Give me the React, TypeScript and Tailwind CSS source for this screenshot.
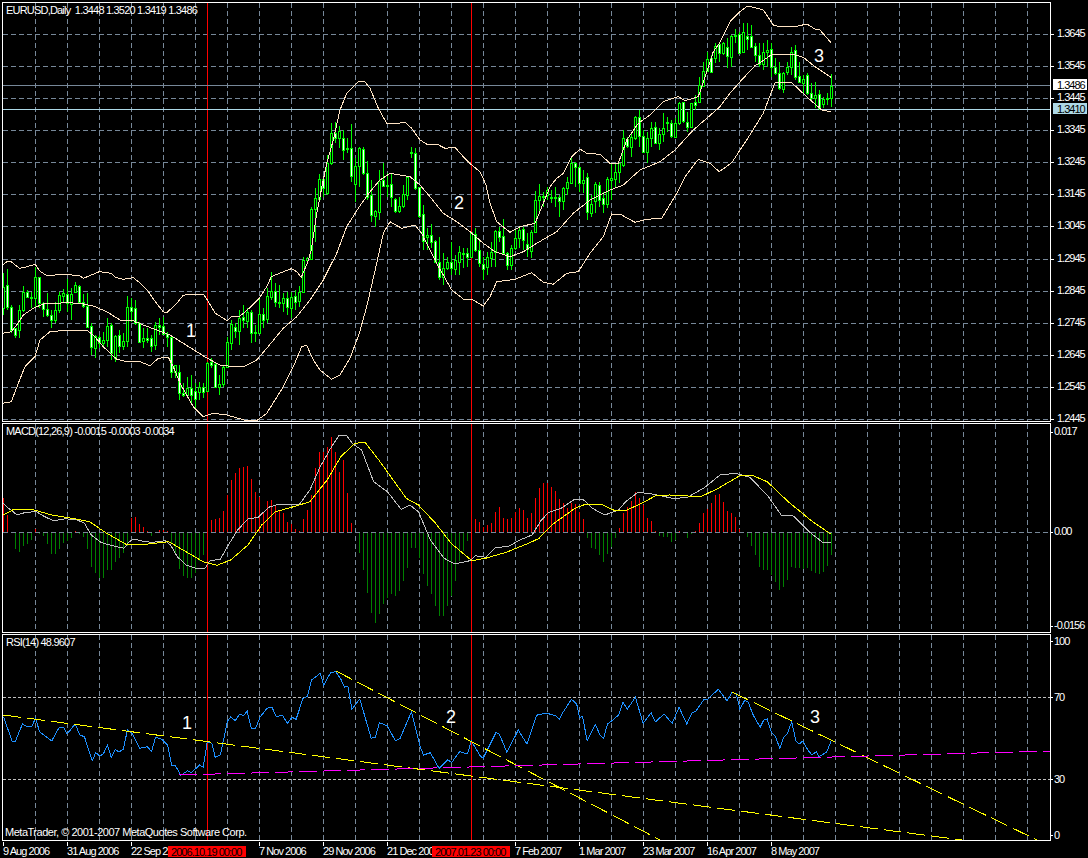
import type { ReactNode } from "react";

const GRID = "#778899";
const X_TICKS = Array.from({ length: 32 }, (_, i) => 35 + 32 * i);

// candles: [high, low, bodyTop, bodyBottom], read off at 3x, one every 4px from x=3
const candles = [
  [820,945,860,925],[808,930,855,920],[915,1000,920,990],[985,1015,985,1005],[915,1015,930,990],[858,935,875,930],[870,895,875,892],[875,925,890,895],[800,925,832,893],[832,925,832,910],
  [905,950,910,928],[880,950,928,945],[930,985,945,960],[905,970,930,960],[875,940,885,930],[868,905,878,887],[838,935,882,910],[865,960,882,912],[845,880,856,875],[855,910,858,905],
  [882,925,905,918],[880,985,918,980],[970,1065,978,1040],[1005,1075,1008,1045],[1005,1045,1010,1030],[995,1040,1020,1028],[955,1040,978,1020],[970,1080,975,1060],[1005,1085,1008,1075],[990,1060,1006,1038],
  [1000,1050,1024,1038],[888,1040,920,1022],[895,965,922,932],[900,975,925,970],[965,1030,970,1025],[985,1045,1015,1022],[985,1030,1015,1020],[1005,1055,1015,1038],[965,1050,975,1035],[955,1005,975,982],
  [950,1005,978,1002],[995,1040,1002,1010],[1005,1135,1012,1115],[1095,1135,1095,1115],[1095,1200,1115,1180],[1150,1190,1178,1185],[1130,1195,1165,1185],[1125,1210,1163,1185],[1150,1225,1173,1198],[1145,1200,1162,1175],
  [1150,1195,1162,1175],[1085,1175,1088,1172],[1075,1105,1085,1095],[1090,1165,1092,1162],[1125,1185,1152,1162],[1095,1160,1102,1152],[1010,1105,1025,1100],[960,1050,972,1028],[970,1015,982,992],[930,1035,955,992],
  [915,985,952,960],[925,985,935,962],[930,1030,935,998],[975,1025,996,999],[890,1000,943,998],[925,985,943,960],[865,970,887,958],[815,900,872,890],[850,920,872,905],[855,925,905,908],
  [880,935,895,908],[875,945,893,920],[875,955,892,925],[870,930,888,905],[858,920,876,902],[770,880,780,875],[772,782,775,780],[620,780,628,778],[565,725,595,628],[522,600,538,598],
  [530,590,538,565],[465,585,490,578],[368,495,398,490],[365,430,398,415],[378,445,393,415],[390,480,415,450],[415,460,445,448],[372,545,445,528],[475,605,497,552],[440,560,445,497],
  // second stretch
  [440,525,447,520],[482,600,520,590],[540,665,585,645],[630,680,633,647],[510,660,543,635],[488,562,540,558],[520,590,555,558],[522,620,552,590],[595,640,598,632],[590,640,618,632],
  [555,625,583,618],[530,600,530,585],[440,475,456,460],[445,570,460,565],[560,655,562,648],[615,750,642,722],[685,750,705,710],[672,745,705,725],[720,790,722,787],[710,840,787,830],
  [760,855,805,832],[770,810,787,803],[725,825,787,805],[765,825,780,806],[738,825,757,785],[745,805,760,762],[745,800,760,772],[695,775,697,772],[685,755,702,750],[720,800,750,790],
  [770,840,793,808],[755,825,772,802],[725,800,755,775],[690,800,692,755],[680,725,692,710],[658,765,707,760],[755,810,760,795],[735,810,745,795],[690,750,715,745],[680,745,690,715],
  [680,750,688,720],[700,770,733,748],[690,775,695,752],[572,700,600,695],[552,640,588,600],[575,620,588,590],[560,600,570,584],[570,610,590,595],[560,620,590,595],[585,650,590,602],
  [560,630,565,602],[530,585,545,565],[470,550,490,548],[485,560,490,500],[495,575,500,548],[510,580,540,548],[520,660,532,637],[585,650,612,638],[545,640,552,603],[545,620,555,600],
  [575,640,595,613],[530,625,538,612],[490,600,535,540],[490,560,515,537],[490,550,490,516],[390,500,415,495],[410,445,418,438],[395,470,412,440],[348,420,352,415],[330,440,352,408],
  [390,460,408,456],[395,490,415,455],[365,440,385,415],[365,430,382,428],[385,450,403,428],[340,425,385,402],[350,395,366,370],[360,415,370,408],[355,415,370,410],[305,375,310,370],
  [305,370,307,362],[335,395,365,382],[308,385,310,382],[285,330,305,315],[230,310,255,305],[185,260,212,258],[155,216,178,214],[165,218,175,215],[130,190,137,175],[128,185,132,160],
  // last stretch
  [125,165,130,158],[115,205,142,168],[105,200,108,170],[88,130,105,108],[95,160,103,158],[70,158,97,155],[70,150,108,116],[75,145,108,142],[130,185,138,165],[128,200,165,192],
  [130,210,157,192],[120,200,150,155],[128,230,148,200],[175,225,202,218],[185,270,218,265],[215,280,220,268],[185,225,202,215],[140,225,155,202],[135,240,150,230],[185,250,228,245],
  [225,280,238,248],[220,285,225,280],[250,305,278,295],[245,325,286,294],[270,330,283,325],[290,325,297,312],[280,315,295,296],[222,320,257,293],
];

let prevClose = 900;
const bodies = candles.map(([hi, lo, top, bot], k) => {
  const bear = Math.abs(top - prevClose) <= Math.abs(bot - prevClose);
  prevClose = bear ? bot : top;
  return { x: 3 + 4 * k, hi: Math.round(hi / 3), lo: Math.round(lo / 3), top: Math.round(top / 3), bot: Math.round(bot / 3), bear };
});

// macd histogram: top of each bar at 3x, zero line sits at 337
const hist = [
  235,285,337,385,392,375,368,358,327,338,345,370,400,400,385,365,360,350,333,340,348,383,438,455,470,470,447,447,422,412,395,375,295,292,312,322,333,345,335,330,330,333,368,395,443,465,472,472,455,420,402,337,
  300,297,295,272,225,180,160,145,140,138,178,215,230,280,243,240,255,272,280,305,312,328,333,297,270,225,143,95,95,80,50,95,155,120,218,308,337,
  395,447,515,575,605,578,550,530,520,525,510,480,440,380,380,410,460,495,520,555,585,585,555,525,480,420,390,360,337,
  297,305,320,315,310,275,262,295,298,295,275,265,270,295,280,235,205,190,188,200,213,237,250,265,250,252,275,297,
  352,382,383,403,422,398,377,350,325,278,262,243,215,233,255,293,303,333,345,348,347,362,357,333,337,352,340,333,308,278,268,248,225,222,245,272,280,292,327,335,
  347,375,402,437,447,447,463,482,507,497,478,437,440,442,445,442,450,455,458,453,435,402,
];

type Seg = [number, number][];
const pts = (segs: { dx: number; sx: number; sy: number; dy: number; p: Seg }[]) =>
  segs.flatMap((s) => s.p.map(([x, y]) => `${(x / s.sx + s.dx).toFixed(1)},${(y / s.sy + s.dy).toFixed(1)}`)).join(" ");

const main = (dx: number, p: Seg) => ({ dx, sx: 3, sy: 3, dy: 0, p });
const upper = pts([
  main(0, [[8,795],[22,784],[34,785],[46,795],[58,805],[70,803],[106,793],[118,812],[142,828],[166,825],[202,822],[220,826],[238,826],[250,835],[274,825],[298,815],[334,820],[346,832],[370,838],[400,833],[418,847],[442,870],[466,905],[490,935],[500,938],[526,915],[550,886],[574,882],[610,882],[622,900],[646,940],[682,962],[694,950],[718,950],[742,930],[778,895],[800,860],[814,830],[838,820],[874,806],[890,815],[904,832],[922,790],[934,750],[950,640],[970,540],[980,490],[1000,420],[1020,330],[1040,280],[1078,243]]),
  main(360, [[15,245],[30,265],[55,325],[80,370],[100,372],[135,367],[155,385],[180,420],[205,435],[230,432],[255,445],[285,442],[310,470],[335,495],[360,515],[378,555],[390,610],[410,665],[450,697],[480,680],[525,670],[550,610],[570,560],[590,535],[610,520],[635,470],[660,447],[680,460],[720,463],[750,490],[775,490],[800,420],[835,370],[870,345],[910,305],[955,290],[975,302],[1015,290],[1040,215],[1060,155],[1080,127]]),
  main(720, [[30,65],[60,35],[82,18],[105,23],[130,30],[160,75],[170,78],[235,78],[260,72],[285,87],[300,90],[333,128]]),
]);
const middle = pts([
  main(0, [[8,1000],[34,995],[50,975],[70,945],[100,925],[130,912],[160,910],[210,908],[250,912],[280,918],[320,935],[360,960],[400,962],[430,975],[470,990],[510,1005],[550,1030],[590,1055],[622,1075],[660,1095],[700,1100],[730,1100],[770,1080],[800,1045],[850,985],[890,950],[930,900],[970,840],[1010,760],[1040,680],[1078,620]]),
  main(360, [[30,575],[60,540],[90,520],[120,525],[150,530],[180,555],[210,590],[250,640],[290,665],[330,695],[370,730],[405,755],[450,770],[490,755],[530,730],[590,695],[640,640],[690,600],[750,570],[790,555],[840,510],[900,485],[945,450],[1000,390],[1078,322]]),
  main(720, [[30,280],[60,245],[105,197],[125,185],[155,163],[220,163],[250,172],[285,200],[333,232]]),
]);
const lower = pts([
  main(0, [[8,1210],[34,1205],[55,1150],[75,1100],[105,1070],[120,1020],[150,995],[200,991],[260,991],[280,1005],[310,1040],[350,1078],[380,1085],[420,1085],[450,1097],[475,1075],[505,1072],[520,1100],[540,1150],[580,1220],[610,1250],[640,1240],[680,1245],[740,1262],[770,1262],[800,1240],[850,1160],[880,1100],[905,1040],[920,1036],[940,1080],[960,1110],[995,1138],[1020,1125],[1050,1075],[1078,1000]]),
  main(360, [[20,920],[50,790],[70,700],[90,665],[125,685],[165,675],[185,700],[230,790],[275,870],[310,897],[340,900],[370,918],[390,890],[410,845],[465,838],[515,818],[550,847],[580,853],[620,820],[655,815],[690,760],[730,710],[755,642],[785,645],[825,667],[860,658],[905,655],[950,580],[975,530],[1015,478],[1050,490],[1078,515]]),
  main(720, [[35,488],[80,420],[130,340],[165,248],[215,248],[260,290],[305,330],[333,335]]),
]);

const macdSilver = pts([
  { dx: 0, sx: 2.904, sy: 3, dy: 420, p: [[10,250],[25,265],[50,285],[75,277],[105,275],[130,290],[155,302],[190,296],[225,300],[245,310],[265,345],[295,368],[330,378],[360,385],[375,365],[390,357],[420,365],[445,367],[480,362],[495,375],[515,410],[540,435],[570,445],[595,445],[610,422],[640,418],[660,380],[690,330],[720,297],[750,292],[780,262],[810,252],[840,255],[870,252],[900,210],[930,140],[960,85],[985,45],[1005,45],[1025,72],[1050,90],[1085,185],[1125,215],[1165,268],[1190,255],[1215,275],[1250,360],[1290,415],[1320,432],[1365,422],[1380,407],[1410,412],[1440,382],[1475,380],[1510,360],[1545,345],[1566,310]] },
  { dx: 540, sx: 2.861, sy: 3, dy: 420, p: [[0,305],[25,277],[60,265],[100,237],[125,240],[150,265],[185,285],[225,270],[245,245],[280,217],[320,222],[380,235],[420,233],[470,203],[515,165],[560,160],[600,172],[650,225],[690,285],[725,288],[770,335],[810,368],[833,368]] },
]);
const macdYellow = pts([
  { dx: 0, sx: 2.904, sy: 3, dy: 420, p: [[10,285],[40,268],[100,270],[150,285],[220,297],[260,305],[310,340],[370,375],[430,372],[490,365],[540,395],[590,425],[630,436],[670,420],[720,375],[760,315],[800,275],[860,258],[900,245],[950,180],[990,110],[1030,70],[1060,67],[1100,120],[1180,235],[1215,255],[1265,310],[1310,370],[1370,422],[1410,415],[1470,397],[1530,372],[1566,355]] },
  { dx: 540, sx: 2.861, sy: 3, dy: 420, p: [[0,350],[40,310],[100,265],[130,253],[175,253],[215,272],[245,272],[290,250],[330,228],[370,225],[460,230],[510,205],[570,168],[610,167],[650,185],[710,245],[780,305],[833,343]] },
]);
const rsi = pts([
  { dx: 0, sx: 2.904, sy: 3, dy: 630, p: [[10,260],[35,333],[45,333],[65,282],[80,290],[92,290],[103,265],[115,305],[150,333],[172,292],[185,292],[195,312],[218,282],[232,315],[245,320],[268,392],[278,368],[290,378],[300,372],[312,345],[323,382],[335,358],[345,366],[358,358],[370,300],[385,312],[405,355],[428,350],[440,365],[452,322],[470,328],[487,345],[498,405],[510,408],[525,436],[545,422],[555,428],[580,405],[590,412],[602,335],[615,340],[625,382],[640,375],[660,275],[670,260],[683,272],[695,254],[708,256],[718,244],[730,296],[742,296],[755,262],[775,235],[790,232],[802,260],[820,256],[835,280],[848,262],[860,268],[880,205],[892,200],[905,150],[930,130],[940,165],[960,128],[975,125],[990,148],[1000,172],[1010,168],[1022,238],[1045,207],[1078,325],[1090,322],[1102,278],[1125,288],[1148,332],[1162,325],[1195,245],[1220,350],[1230,375],[1250,368],[1275,415],[1300,390],[1312,397],[1335,365],[1358,372],[1368,332],[1395,378],[1403,385],[1440,308],[1450,312],[1472,367],[1505,300],[1530,342],[1558,256]] },
  { dx: 540, sx: 2.861, sy: 3, dy: 630, p: [[0,253],[20,250],[45,257],[55,268],[65,248],[90,208],[105,222],[113,262],[122,260],[135,333],[158,283],[172,315],[182,325],[193,282],[205,273],[225,255],[237,217],[250,237],[273,202],[295,280],[318,248],[330,276],[355,252],[378,280],[398,232],[420,282],[435,248],[445,245],[470,207],[480,207],[510,178],[535,212],[550,187],[562,192],[572,238],[585,212],[595,215],[610,255],[630,292],[640,270],[650,267],[662,308],[673,318],[686,355],[697,322],[708,310],[720,275],[732,332],[742,342],[752,333],[765,358],[778,375],[790,365],[798,380],[820,367],[833,332]] },
]);

const priceTicks: [number, string][] = [
  [34,"1.3645"],[66,"1.3545"],[98,"1.3445"],[130,"1.3345"],[162,"1.3245"],[194,"1.3145"],[226,"1.3045"],[259,"1.2945"],[291,"1.2845"],[323,"1.2745"],[355,"1.2645"],[387,"1.2545"],[419,"1.2445"],
];
// the two date boxes sit on top of these, so "22 Sep" and "21 Dec" stop short
const timeLabels: [number, string][] = [
  [3,"9 Aug 2006"],[67,"31 Aug 2006"],[131,"22 Sep 2"],[259,"7 Nov 2006"],[323,"29 Nov 2006"],[387,"21 Dec 200"],[515,"7 Feb 2007"],[579,"1 Mar 2007"],[643,"23 Mar 2007"],[707,"16 Apr 2007"],[771,"8 May 2007"],
];

const Grid = ({ top, bottom, rows, rowColor = GRID, rowDash = "5 3" }: { top: number; bottom: number; rows: number[]; rowColor?: string; rowDash?: string }) => (
  <g shapeRendering="crispEdges" fill="none" strokeWidth={1}>
    {X_TICKS.map((x) => (
      <line key={x} x1={x + 0.5} x2={x + 0.5} y1={top} y2={bottom} stroke={GRID} strokeDasharray="5 3" />
    ))}
    {rows.map((y) => (
      <line key={y} x1={3} x2={1050} y1={y + 0.5} y2={y + 0.5} stroke={rowColor} strokeDasharray={rowDash} />
    ))}
  </g>
);

const Cursors = ({ top, bottom }: { top: number; bottom: number }) => (
  <g shapeRendering="crispEdges" stroke="#ff0000">
    <line x1={207.5} x2={207.5} y1={top} y2={bottom} />
    <line x1={471.5} x2={471.5} y1={top} y2={bottom} />
  </g>
);

const Curve = ({ points, color }: { points: string; color: string }) => (
  <polyline points={points} fill="none" stroke={color} strokeWidth={1} shapeRendering="crispEdges" />
);

const Mark = ({ x, y, n }: { x: number; y: number; n: string }) => (
  <text x={x} y={y} fill="#ffffff" className="text-[18px] tracking-normal">{n}</text>
);

const PriceChart = () => (
  <svg width={1047} height={418} viewBox="3 3 1047 418" className="block">
    <Grid top={3} bottom={421} rows={priceTicks.map((t) => t[0])} />
    <Cursors top={3} bottom={421} />
    <g shapeRendering="crispEdges">
      <rect x={3} y={85} width={1047} height={1} fill={GRID} />
      <rect x={3} y={109} width={1047} height={1} fill="#add8e6" />
      {bodies.map((c) => (
        <g key={c.x}>
          <rect x={c.x} y={c.hi} width={1} height={c.lo - c.hi} fill="#00ff00" />
          <rect x={c.x - 1} y={c.top} width={3} height={Math.max(c.bot - c.top, 1) + 1} fill="#00ff00" />
          {c.bot - c.top > 1 && (
            <rect x={c.x} y={c.top + 1} width={1} height={c.bot - c.top - 1} fill={c.bear ? "#ffffff" : "#000000"} />
          )}
        </g>
      ))}
    </g>
    <Curve points={upper} color="#ffe4c4" />
    <Curve points={middle} color="#ffe4c4" />
    <Curve points={lower} color="#ffe4c4" />
    <Mark x={186} y={337} n="1" />
    <Mark x={454} y={209} n="2" />
    <Mark x={814} y={62} n="3" />
  </svg>
);

const MacdChart = () => (
  <svg width={1047} height={208} viewBox="3 424 1047 208" className="block">
    <Grid top={424} bottom={632} rows={[532]} />
    <Cursors top={424} bottom={632} />
    <g shapeRendering="crispEdges">
      {hist.map((y, k) => {
        const top = Math.round(y / 3) + 420;
        if (y === 337) return null;
        return y < 337 ? (
          <rect key={k} x={3 + 4 * k} y={top} width={1} height={532 - top} fill="#ff0000" />
        ) : (
          <rect key={k} x={3 + 4 * k} y={533} width={1} height={top - 532} fill="#008000" />
        );
      })}
    </g>
    <Curve points={macdSilver} color="#c0c0c0" />
    <Curve points={macdYellow} color="#ffff00" />
  </svg>
);

const RsiChart = () => (
  <svg width={1047} height={205} viewBox="3 635 1047 205" className="block">
    <Grid top={635} bottom={840} rows={[697, 779]} rowColor="#c0c0c0" rowDash="3 2" />
    <Cursors top={635} bottom={840} />
    <Curve points={rsi} color="#1e90ff" />
    <g shapeRendering="crispEdges" strokeWidth={1} strokeDasharray="18 6" fill="none">
      <line x1={3} y1={715} x2={970} y2={841} stroke="#ffff00" />
      <line x1={336} y1={671} x2={662} y2={841} stroke="#ffff00" />
      <line x1={732} y1={692} x2={1037} y2={840} stroke="#ffff00" />
      <line x1={179} y1={775} x2={1050} y2={751} stroke="#ff00ff" />
    </g>
    <Mark x={182} y={729} n="1" />
    <Mark x={446} y={723} n="2" />
    <Mark x={810} y={723} n="3" />
  </svg>
);

const Axis = ({ top, height, ticks, dy }: { top: number; height: number; ticks: [number, string][]; dy: number }) => (
  <svg width={37} height={height} viewBox={`1051 ${top} 37 ${height}`} className="block tracking-[-1px]">
    {ticks.map(([y, label]) => (
      <g key={label}>
        <rect x={1051} y={y} width={2} height={1} fill="#ffffff" shapeRendering="crispEdges" />
        <text x={1054} y={y + dy} fill="#ffffff">{label}</text>
      </g>
    ))}
  </svg>
);

const PriceAxis = () => (
  <svg width={37} height={420} viewBox="1051 2 37 420" className="block tracking-[-1px]">
    {priceTicks.map(([y, label]) => (
      <g key={label}>
        <rect x={1051} y={y} width={3} height={1} fill="#ffffff" shapeRendering="crispEdges" />
        <text x={1057} y={y + 3} fill="#ffffff">{label}</text>
      </g>
    ))}
    <rect x={1053} y={79} width={34} height={11} fill="#ffffff" shapeRendering="crispEdges" />
    <text x={1057} y={89} fill="#000000">1.3486</text>
    <rect x={1053} y={103} width={34} height={11} fill="#add8e6" shapeRendering="crispEdges" />
    <text x={1057} y={113} fill="#000000">1.3410</text>
  </svg>
);

const TimeAxis = () => (
  <svg width={1086} height={17} viewBox="2 841 1086 17" className="block tracking-[-0.95px]">
    {timeLabels.map(([x, label]) => (
      <g key={x}>
        <rect x={x} y={841} width={1} height={4} fill="#ffffff" shapeRendering="crispEdges" />
        <text x={x} y={854} fill="#ffffff">{label}</text>
      </g>
    ))}
    <rect x={168} y={845} width={78} height={11} fill="#ff0000" shapeRendering="crispEdges" />
    <text x={171} y={855} fill="#000000">2006.10.19 00:00</text>
    <rect x={432} y={845} width={78} height={11} fill="#ff0000" shapeRendering="crispEdges" />
    <text x={435} y={855} fill="#000000">2007.01.23 00:00</text>
  </svg>
);

const Pane = ({ height, title, footer, axis, children }: { height: string; title: string; footer?: string; axis: ReactNode; children: ReactNode }) => (
  <div className="flex mb-px">
    <div className={`relative w-[1049px] border border-white ${height}`}>
      {children}
      <span className="absolute left-[3px] top-[1px] whitespace-pre leading-[13px] tracking-[-0.8px] text-white">{title}</span>
      {footer && <span className="absolute left-[2px] bottom-[1px] whitespace-pre leading-[13px] tracking-[-0.48px] text-white">{footer}</span>}
    </div>
    {axis}
  </div>
);

export default function App() {
  return (
    <div className="h-[858px] w-[1088px] overflow-hidden bg-black pl-[2px] pt-[2px] text-[11px] [font-family:'Liberation_Sans',Arial,sans-serif]">
      <Pane height="h-[420px]" title="EURUSD,Daily  1.3448 1.3520 1.3419 1.3486" axis={<PriceAxis />}>
        <PriceChart />
      </Pane>
      <Pane
        height="h-[210px]"
        title="MACD(12,26,9) -0.0015 -0.0003 -0.0034"
        axis={<Axis top={423} height={210} dy={3} ticks={[[432, "0.017"], [532, "0.00"], [626, "-0.0156"]]} />}
      >
        <MacdChart />
      </Pane>
      <Pane
        height="h-[207px]"
        title="RSI(14) 48.9607"
        footer="MetaTrader, © 2001-2007 MetaQuotes Software Corp."
        axis={<Axis top={634} height={207} dy={4} ticks={[[641, "100"], [697, "70"], [779, "30"], [835, "0"]]} />}
      >
        <RsiChart />
      </Pane>
      <TimeAxis />
    </div>
  );
}
